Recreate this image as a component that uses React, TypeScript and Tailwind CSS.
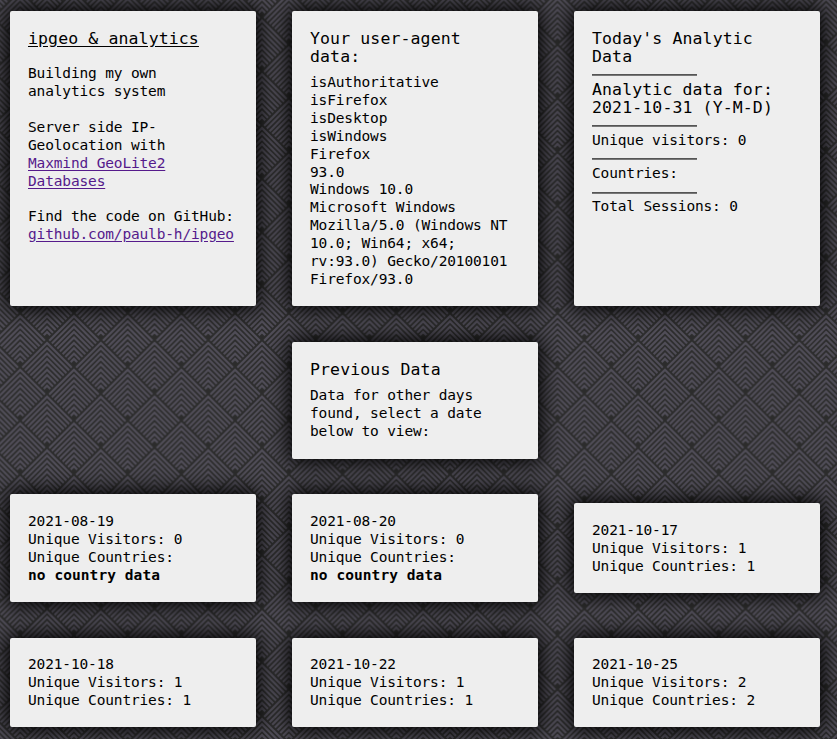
import type { ReactNode } from "react";

const chevrons = [0, 1, 2, 3, 4, 5, 6, 7, 8];

function Diamond({ x, y }: { x: number; y: number }) {
  return (
    <g transform={`translate(${x} ${y})`}>
      {chevrons.map((i) => {
        const top = 2.9 + i * 5.37;
        const reach = (53.73 - top) / 2 - 0.7;
        return (
          <path
            key={i}
            d={`M${-reach} ${top + reach}L0 ${top}L${reach} ${top + reach}`}
          />
        );
      })}
    </g>
  );
}

function Backdrop() {
  return (
    <svg className="absolute inset-0 -z-10 h-full w-full" aria-hidden="true">
      <defs>
        <pattern id="weave" x="20.2" y="313.1" width="53.73" height="53.73" patternUnits="userSpaceOnUse">
          <rect width="54" height="54" fill="#2c2c2c" />
          <g fill="none" stroke="#514e59" strokeWidth="2.1">
            <Diamond x={0} y={0} />
            <Diamond x={53.73} y={0} />
            <Diamond x={26.865} y={26.865} />
            <Diamond x={26.865} y={-26.865} />
          </g>
        </pattern>
      </defs>
      <rect width="100%" height="100%" fill="url(#weave)" />
    </svg>
  );
}

function Card({ className = "", children }: { className?: string; children: ReactNode }) {
  return (
    <section className={`rounded-[2px] bg-[#eeeeee] px-[18px] shadow-[0_0_20px_3px_#000] ${className}`}>
      {children}
    </section>
  );
}

function Title({ className = "", children }: { className?: string; children: ReactNode }) {
  return <h2 className={`text-[16.5px] leading-[18px] tracking-[0.12px] ${className}`}>{children}</h2>;
}

function Rule() {
  return <div className="h-[2px] w-[105px] border-t border-b border-t-[#555] border-b-[#777]" />;
}

function Day({ date, visitors, countries, className = "h-[90px] pt-[18px]" }: { date: string; visitors: number; countries?: number; className?: string }) {
  return (
    <Card className={className}>
      <p>{date}</p>
      <p>Unique Visitors: {visitors}</p>
      <p>Unique Countries: {countries}</p>
      {countries === undefined && <p className="font-bold tracking-[0.07px]">no country data</p>}
    </Card>
  );
}

const agent = [
  "isAuthoritative", "isFirefox", "isDesktop", "isWindows", "Firefox", "93.0", "Windows 10.0",
  "Microsoft Windows", "Mozilla/5.0 (Windows NT", "10.0; Win64; x64;", "rv:93.0) Gecko/20100101", "Firefox/93.0",
];

export default function App() {
  return (
    <main className="relative isolate h-[739px] w-[837px] overflow-hidden pt-[11px] pl-[10px] font-['DejaVu_Sans_Mono',monospace] text-[14.5px] leading-[18px] tracking-[-0.15px] whitespace-nowrap text-black">
      <Backdrop />
      <div className="grid grid-cols-[246px_246px_246px] gap-x-9">
        <Card className="h-[295px] pt-[19px]">
          <Title className="underline underline-offset-2">ipgeo &amp; analytics</Title>
          <p className="mt-[16px]">Building my own<br />analytics system</p>
          <p className="mt-[18px]">
            Server side IP-<br />Geolocation with<br />
            <a className="text-[#551a8b] underline underline-offset-2">Maxmind GeoLite2<br />Databases</a>
          </p>
          <p className="mt-[17px]">
            Find the code on GitHub:<br />
            <a className="text-[#551a8b] underline underline-offset-2">github.com/paulb-h/ipgeo</a>
          </p>
        </Card>
        <Card className="h-[295px] pt-[19px]">
          <Title>Your user-agent<br />data:</Title>
          <div className="mt-2 leading-[17.9px]">
            {agent.map((line) => <p key={line}>{line}</p>)}
          </div>
        </Card>
        <Card className="h-[295px] pt-[19px]">
          <Title className="mb-[8px]">Today's Analytic<br />Data</Title>
          <Rule />
          <Title className="mt-[5px] mb-[8px]">Analytic data for:<br />2021-10-31 (Y-M-D)</Title>
          <Rule />
          <p className="mt-[4px] mb-[9px]">Unique visitors: 0</p>
          <Rule />
          <p className="mt-[4px] mb-[10px]">Countries:</p>
          <Rule />
          <p className="mt-[3px]">Total Sessions: 0</p>
        </Card>
      </div>
      <div className="mt-9 flex pl-[282px]">
        <Card className="h-[117px] w-[246px] pt-[19px]">
          <Title>Previous Data</Title>
          <p className="mt-[7px]">Data for other days<br />found, select a date<br />below to view:</p>
        </Card>
      </div>
      <div className="mt-[35px] grid grid-cols-[246px_246px_246px] items-center gap-9">
        <Day date="2021-08-19" visitors={0} className="h-[108px] pt-[18px]" />
        <Day date="2021-08-20" visitors={0} className="h-[108px] pt-[18px]" />
        <Day date="2021-10-17" visitors={1} countries={1} />
        <Day date="2021-10-18" visitors={1} countries={1} className="h-[89px] pt-[17px]" />
        <Day date="2021-10-22" visitors={1} countries={1} className="h-[89px] pt-[17px]" />
        <Day date="2021-10-25" visitors={2} countries={2} className="h-[89px] pt-[17px]" />
      </div>
    </main>
  );
}
